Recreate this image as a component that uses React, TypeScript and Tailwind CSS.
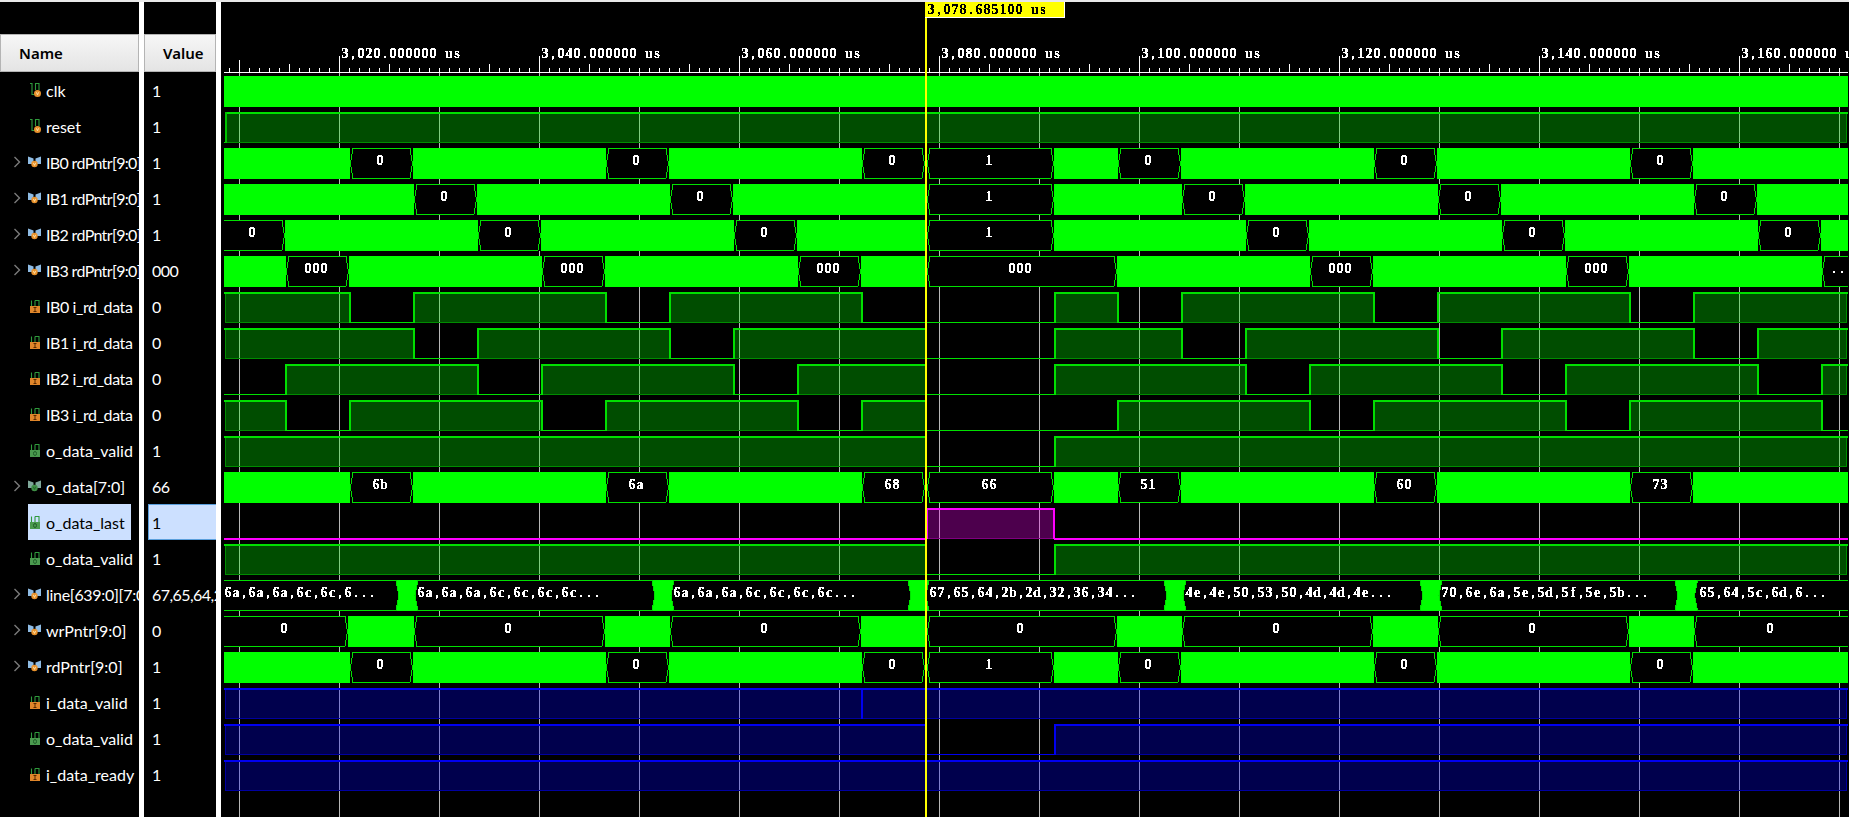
import React from "react";

type Seg = [number, number, string?, number?];

const WAVE_FONT = "'Liberation Serif', serif";
const X0 = 224;
const X1 = 1848;

function rowY(i: number) {
  return 76 + 36 * i;
}

const names: { name: string; value: string; kind: "s" | "b" | "bo" | "o" | "i"; chevron?: boolean; sel?: boolean; tight?: string }[] = [
  { name: "clk", value: "1", kind: "s" },
  { name: "reset", value: "1", kind: "s" },
  { name: "IB0 rdPntr[9:0]", value: "1", kind: "b", chevron: true, tight: "tracking-[-0.65px]" },
  { name: "IB1 rdPntr[9:0]", value: "1", kind: "b", chevron: true, tight: "tracking-[-0.65px]" },
  { name: "IB2 rdPntr[9:0]", value: "1", kind: "b", chevron: true, tight: "tracking-[-0.65px]" },
  { name: "IB3 rdPntr[9:0]", value: "000", kind: "b", chevron: true, tight: "tracking-[-0.65px]" },
  { name: "IB0 i_rd_data", value: "0", kind: "i", tight: "tracking-[-0.4px]" },
  { name: "IB1 i_rd_data", value: "0", kind: "i", tight: "tracking-[-0.4px]" },
  { name: "IB2 i_rd_data", value: "0", kind: "i", tight: "tracking-[-0.4px]" },
  { name: "IB3 i_rd_data", value: "0", kind: "i", tight: "tracking-[-0.4px]" },
  { name: "o_data_valid", value: "1", kind: "o" },
  { name: "o_data[7:0]", value: "66", kind: "bo", chevron: true },
  { name: "o_data_last", value: "1", kind: "o", sel: true },
  { name: "o_data_valid", value: "1", kind: "o" },
  { name: "line[639:0][7:0]", value: "67,65,64,2", kind: "b", chevron: true, tight: "tracking-[-0.3px]" },
  { name: "wrPntr[9:0]", value: "0", kind: "b", chevron: true },
  { name: "rdPntr[9:0]", value: "1", kind: "b", chevron: true },
  { name: "i_data_valid", value: "1", kind: "i" },
  { name: "o_data_valid", value: "1", kind: "o" },
  { name: "i_data_ready", value: "1", kind: "i" },
];

function SignalIcon({ kind }: { kind: "s" | "b" | "bo" | "o" | "i" }) {
  if (kind === "b" || kind === "bo") {
    const badge = kind === "b" ? "#e8912c" : "#3f8f46";
    const wing = kind === "b" ? "#8fbce4" : "#7fa89a";
    return (
      <svg width="14" height="14" viewBox="0 0 14 14" className="shrink-0">
        <path d="M0 1.5 L5.5 3.5 V9 H0 Z" fill={wing} />
        <path d="M13 1.5 L7.5 3.5 V9 H13 Z" fill={wing} />
        <circle cx="6.5" cy="9" r="3.2" fill={badge} />
        <path d="M5.3 7.8 L6.5 10.4 L7.7 7.8" fill="none" stroke={kind === "b" ? "#fff0c0" : "#1f5f28"} strokeWidth="0.8" />
      </svg>
    );
  }
  if (kind === "s") {
    return (
      <svg width="14" height="16" viewBox="0 0 14 16" className="shrink-0">
        <path d="M2 1.5 H4 V12.5 H6.5" fill="none" stroke="#2f9a3c" strokeWidth="1.1" />
        <path d="M7.5 8 V1.5 H11 V8" fill="none" stroke="#2f9a3c" strokeWidth="1.1" />
        <circle cx="9.5" cy="11.5" r="3.5" fill="#e8912c" />
        <path d="M8.4 10.3 L9.5 12.8 L10.6 10.3" fill="none" stroke="#fff0c0" strokeWidth="0.8" />
      </svg>
    );
  }
  const body = kind === "o" ? "#4a9a4e" : "#e0862a";
  return (
    <svg width="14" height="16" viewBox="0 0 14 16" className="shrink-0">
      <path d="M3.5 9 V2.5 M7 9 V2.5 M7 2.5 H11 V9" fill="none" stroke="#2f9a3c" strokeWidth="1.1" />
      <rect x="2" y="8" width="10" height="7" fill={body} />
      {kind === "o" ? (
        <ellipse cx="7" cy="11.5" rx="1.5" ry="2" fill="none" stroke="#1f5f28" strokeWidth="1" />
      ) : (
        <path d="M5.5 9.5 H8.5 M7 9.5 V13.5 M5.5 13.5 H8.5" fill="none" stroke="#5a2a00" strokeWidth="1" />
      )}
    </svg>
  );
}

function HeaderCell({ label, className }: { label: string; className: string }) {
  return (
    <div
      className={`h-[38px] flex items-center border border-[#b4b4b4] bg-gradient-to-b from-[#f6f6f6] to-[#e4e4e4] font-['Noto_Sans',sans-serif] text-[15px] font-semibold text-black ${className}`}
    >
      {label}
    </div>
  );
}

/* Fixed 8px character cells, each glyph centred in its own cell. */
function CellText({ x, y, text, fill = "#fff" }: { x: number; y: number; text: string; fill?: string }) {
  const xs = Array.from(text).map((_, k) => x + 4 + 8 * k).join(" ");
  return (
    <text
      x={xs}
      y={y}
      fill={fill}
      fontFamily={WAVE_FONT}
      fontWeight="700"
      fontSize="14"
      textAnchor="middle"
      filter="url(#crisp)"
      xmlSpace="preserve"
    >
      {text}
    </text>
  );
}

function Hex({ y, a, b, label, lx, slope = 2.5, sharp = true }: {
  y: number; a: number; b: number; label?: string; lx?: number; slope?: number; sharp?: boolean;
}) {
  const top = y + 0.5;
  const bot = y + 30.5;
  const mid = y + 15.5;
  const pts = `${a + 0.5},${mid} ${a + 0.5 + slope},${top} ${b - 0.5 - slope},${top} ${b - 0.5},${mid} ${b - 0.5 - slope},${bot} ${a + 0.5 + slope},${bot}`;
  const centre = Math.round((a + b) / 2 - 2);
  const start = lx ?? centre - ((label ?? "").length * 8) / 2;
  return (
    <g>
      {sharp && <rect x={a} y={y} width={b - a} height={31} fill="#000" />}
      <polygon points={pts} fill="#000" stroke="#00e000" strokeWidth="1" />
      {label && <CellText x={start} y={y + 17} text={label} />}
    </g>
  );
}

function BusRow({ i, segs }: { i: number; segs: Seg[] }) {
  const y = rowY(i);
  return (
    <g>
      <rect x={X0} y={y} width={X1 - X0} height={31} fill="#00ff00" />
      {segs.map(([a, b, l, lx], k) => (
        <Hex key={k} y={y} a={a} b={b} label={l} lx={lx} />
      ))}
    </g>
  );
}

function Digital({ i, high, line = "#00e000", edge = "#008c00", fill = "#00ff00", lowW = 1 }: {
  i: number; high: [number, number][]; line?: string; edge?: string; fill?: string; lowW?: number;
}) {
  const y = rowY(i);
  const lows: [number, number][] = [];
  let p = X0;
  for (const [a, b] of high) {
    if (a > p) lows.push([p, a]);
    p = b;
  }
  if (p < X1) lows.push([p, X1]);
  return (
    <g>
      {high.map(([a, b], k) => {
        const atStart = a <= 225;
        const atEnd = b >= X1;
        const fx = a + 1;
        const fw = (atEnd ? b - 2 : b) - fx;
        return (
          <g key={k}>
            <rect x={fx} y={y + 1} width={fw} height={29} fill={fill} fillOpacity="0.3" />
            <rect x={fx} y={y + 30} width={fw} height={1} fill={edge} />
            {atStart && <rect x={fx} y={y + 1} width={1} height={30} fill={edge} />}
            {atEnd && <rect x={b - 2} y={y + 1} width={1} height={30} fill={edge} />}
            <rect x={a} y={y} width={b - a} height={2} fill={line} />
            {!atStart && <rect x={a} y={y} width={2} height={31} fill={line} />}
            {!atEnd && <rect x={b - 1} y={y} width={2} height={31} fill={line} />}
          </g>
        );
      })}
      {lows.map(([a, b], k) => (
        <rect key={k} x={a} y={y + 30 - (lowW - 1) / 2} width={b - a} height={lowW} fill={line} />
      ))}
    </g>
  );
}

const ib0: Seg[] = [[350, 413, "0"], [606, 669, "0"], [862, 925, "0"], [927, 1054, "1"], [1118, 1181, "0"], [1374, 1437, "0"], [1630, 1693, "0"]];
const ib1: Seg[] = [[414, 477, "0"], [670, 733, "0"], [927, 1054, "1"], [1182, 1245, "0"], [1438, 1501, "0"], [1694, 1757, "0"]];
const ib2: Seg[] = [[215, 285, "0", 248], [478, 541, "0"], [734, 797, "0"], [927, 1054, "1"], [1246, 1309, "0"], [1502, 1565, "0"], [1758, 1821, "0"]];
const ib3: Seg[] = [[286, 349, "000"], [542, 605, "000"], [798, 861, "000"], [927, 1117, "000"], [1310, 1373, "000"], [1566, 1629, "000"], [1822, 1860, "..", 1830]];
const oData: Seg[] = [[350, 413, "6b"], [606, 669, "6a"], [862, 925, "68"], [927, 1054, "66"], [1118, 1181, "51"], [1374, 1437, "60"], [1630, 1693, "73"]];
const wr: Seg[] = [[215, 348, "0", 280], [414, 605, "0"], [670, 861, "0"], [927, 1117, "0", 1016], [1182, 1373, "0"], [1438, 1629, "0"], [1694, 1860, "0", 1766]];
const lineSegs: [number, number, string][] = [
  [215, 399.5, "6a,6a,6a,6c,6c,6..."],
  [414.5, 655.5, "6a,6a,6a,6c,6c,6c,6c..."],
  [670.5, 911.5, "6a,6a,6a,6c,6c,6c,6c..."],
  [925.5, 1167.5, "67,65,64,2b,2d,32,36,34..."],
  [1182.5, 1423.5, "4e,4e,50,53,50,4d,4d,4e..."],
  [1438.5, 1678.5, "70,6e,6a,5e,5d,5f,5e,5b..."],
  [1694, 1860, "65,64,5c,6d,6..."],
];
const lineTextX = [224, 417, 673, 929, 1185, 1441, 1699];

const ticks: number[] = [];
for (let x = 229; x < X1; x += 10) ticks.push(x);
const grid: number[] = [];
for (let x = 239; x < X1; x += 100) grid.push(x);
const majors: [number, string][] = [
  [339, "3,020.000000 us"],
  [539, "3,040.000000 us"],
  [739, "3,060.000000 us"],
  [939, "3,080.000000 us"],
  [1139, "3,100.000000 us"],
  [1339, "3,120.000000 us"],
  [1539, "3,140.000000 us"],
  [1739, "3,160.000000 us"],
];

function WaveCanvas() {
  return (
    <svg width="1628" height="815" viewBox="221 2 1628 815" shapeRendering="crispEdges" className="block">
      <defs>
        <filter id="crisp" x="-5%" y="-20%" width="110%" height="140%" colorInterpolationFilters="sRGB">
          <feComponentTransfer>
            <feFuncA type="discrete" tableValues="0 1 1" />
          </feComponentTransfer>
        </filter>
        <clipPath id="waveClip">
          <rect x={X0} y="2" width={X1 - X0} height="815" />
        </clipPath>
      </defs>

      {/* ruler */}
      <rect x={X0} y="72" width={X1 - X0} height="1" fill="#fff" />
      {ticks.map((x) => {
        const isMid = (x - 289) % 100 === 0;
        const isMajor = majors.some((m) => m[0] === x);
        const first = x === 239;
        const top = isMajor ? 56 : first ? 60 : isMid ? 64 : 68;
        return <rect key={x} x={x} y={top} width="1" height={72 - top} fill="#fff" />;
      })}
      {majors.map(([x, t]) => (
        <CellText key={x} x={x + 2} y={58} text={t} />
      ))}

      {/* grid */}
      {grid.map((x) => (
        <rect key={x} x={x} y="73" width="1" height="744" fill="#b8b8b8" />
      ))}

      <g clipPath="url(#waveClip)">
        <rect x={X0} y={rowY(0)} width={X1 - X0} height="31" fill="#00ff00" />
        <Digital i={1} high={[[225, 1848]]} />
        <rect x="225" y={rowY(1)} width="2" height="31" fill="#00c000" />
        <BusRow i={2} segs={ib0} />
        <BusRow i={3} segs={ib1} />
        <BusRow i={4} segs={ib2} />
        <BusRow i={5} segs={ib3} />
        <Digital i={6} high={[[224, 350], [413, 606], [669, 862], [1054, 1118], [1181, 1374], [1437, 1630], [1693, 1848]]} />
        <Digital i={7} high={[[224, 414], [477, 670], [733, 926], [1054, 1182], [1245, 1438], [1501, 1694], [1757, 1848]]} />
        <Digital i={8} high={[[285, 478], [541, 734], [797, 926], [1054, 1246], [1309, 1502], [1565, 1758], [1821, 1848]]} />
        <Digital i={9} high={[[224, 286], [349, 542], [605, 798], [861, 926], [1117, 1310], [1373, 1566], [1629, 1822]]} />
        <Digital i={10} high={[[224, 926], [1054, 1848]]} />
        <BusRow i={11} segs={oData} />
        <Digital i={12} high={[[926, 1054]]} line="#ff00ff" edge="#800080" fill="#ff00ff" lowW={2} />
        <Digital i={13} high={[[224, 926], [1054, 1848]]} />
        <g>
          <rect x={X0} y={rowY(14)} width={X1 - X0} height="31" fill="#00ff00" />
          {lineSegs.map(([a, b, l], k) => (
            <Hex key={k} y={rowY(14)} a={a} b={b} label={l} lx={lineTextX[k]} slope={3} sharp={false} />
          ))}
        </g>
        <BusRow i={15} segs={wr} />
        <BusRow i={16} segs={ib0} />
        <Digital i={17} high={[[224, 1848]]} line="#0000f0" edge="#0000a0" fill="#0000ff" />
        <rect x="861" y={rowY(17)} width="2" height="31" fill="#0000f0" />
        <Digital i={18} high={[[224, 926], [1054, 1848]]} line="#0000f0" edge="#0000a0" fill="#0000ff" />
        <Digital i={19} high={[[224, 1848]]} line="#0000f0" edge="#0000a0" fill="#0000ff" />
      </g>

      {/* cursor */}
      <rect x="925" y="18" width="2" height="799" fill="#ffff00" />
      <rect x="925" y="2" width="140" height="16" fill="#ffff00" />
      <rect x="1064" y="2" width="1" height="16" fill="#fff" />
      <rect x="925" y="17" width="140" height="1" fill="#fff" />
      <CellText x={927} y={14} text="3,078.685100 us" fill="#000" />
    </svg>
  );
}

export default function App() {
  return (
    <div className="w-[1849px] h-[817px] overflow-hidden bg-black flex flex-col font-['Lato',sans-serif]">
      <div className="h-[2px] bg-[#e8e8e8] shrink-0" />
      <div className="flex flex-1 min-h-0">
        <div className="w-[139px] shrink-0 pt-[32px]">
          <HeaderCell label="Name" className="pl-[18px]" />
          {names.map((n, i) => (
            <div key={i} className="h-[36px] flex items-center text-[16px] text-white whitespace-nowrap overflow-hidden">
              <div className="w-[28px] shrink-0 flex justify-end pr-[7px]">
                {n.chevron && (
                  <svg width="8" height="12" viewBox="0 0 8 12">
                    <path d="M1.5 1 L6.5 6 L1.5 11" fill="none" stroke="#7a7a7a" strokeWidth="1.4" />
                  </svg>
                )}
              </div>
              <div className={`flex items-center h-[36px] ${n.sel ? "w-[103px] bg-[#cce0ff] text-black" : ""}`}>
                <div className="w-[18px] shrink-0">
                  <SignalIcon kind={n.kind} />
                </div>
                <span className={`pt-[2px] ${n.tight ?? ""}`}>{n.name}</span>
              </div>
            </div>
          ))}
        </div>
        <div className="w-[5px] shrink-0 bg-white" />
        <div className="w-[72px] shrink-0 pt-[32px]">
          <HeaderCell label="Value" className="pl-[18px]" />
          {names.map((n, i) => (
            <div key={i} className="h-[36px] pl-[4px] whitespace-nowrap overflow-hidden">
              <div
                className={`h-[36px] flex items-center text-[16px] tracking-[-0.55px] ${
                  n.sel ? "bg-[#cce0ff] border-y border-l border-[#5a9fdc] pl-[3px]" : "pl-[4px]"
                }`}
              >
                <span className={`pt-[2px] ${n.sel ? "text-black" : "text-white"}`}>{n.value}</span>
              </div>
            </div>
          ))}
        </div>
        <div className="w-[5px] shrink-0 bg-white" />
        <div className="flex-1 min-w-0">
          <WaveCanvas />
        </div>
      </div>
    </div>
  );
}
